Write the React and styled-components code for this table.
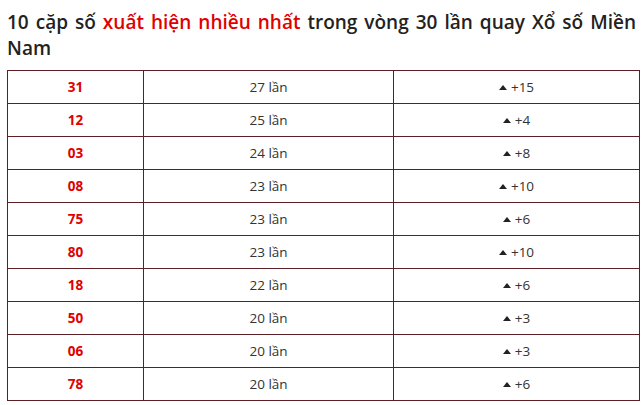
import React from 'react';
import styled, { createGlobalStyle } from 'styled-components';

const GlobalStyle = createGlobalStyle`
  body {
    margin: 0;
    background: #ffffff;
    font-family: 'Open Sans', 'Noto Sans', sans-serif;
  }
`;

const Page = styled.div`
  padding: 9px 6px 0 7px;
`;

const Heading = styled.h2`
  margin: 0 0 9px 0;
  font-size: 19px;
  font-weight: 600;
  line-height: 26px;
  color: #222222;
  text-align: justify;
`;

const Hot = styled.span`
  color: #e00000;
`;

const Table = styled.table`
  width: 629px;
  border-collapse: collapse;
  table-layout: fixed;
  font-size: 13.5px;
  color: #333333;
`;

const Cell = styled.td`
  height: 32px;
  padding: 0;
  border: 1px solid #5b1f25;
  text-align: center;
  vertical-align: middle;
  width: ${({ $w }) => $w}px;
`;

const Number = styled.span`
  color: #e00000;
  font-weight: 700;
`;

const Up = styled.span`
  display: inline-block;
  width: 0;
  height: 0;
  border-left: 4px solid transparent;
  border-right: 4px solid transparent;
  border-bottom: 5px solid #222222;
  margin-right: 4px;
  vertical-align: 2px;
`;

const rows = [
  ['31', 27, 15],
  ['12', 25, 4],
  ['03', 24, 8],
  ['08', 23, 10],
  ['75', 23, 6],
  ['80', 23, 10],
  ['18', 22, 6],
  ['50', 20, 3],
  ['06', 20, 3],
  ['78', 20, 6],
];

export default function App() {
  return (
    <Page>
      <GlobalStyle />
      <Heading>
        10 cặp số <Hot>xuất hiện nhiều nhất</Hot> trong vòng 30 lần quay Xổ số Miền Nam
      </Heading>
      <Table>
        <tbody>
          {rows.map(([num, times, diff]) => (
            <tr key={num}>
              <Cell $w={135}>
                <Number>{num}</Number>
              </Cell>
              <Cell $w={249}>{times} lần</Cell>
              <Cell $w={245}>
                <Up />+{diff}
              </Cell>
            </tr>
          ))}
        </tbody>
      </Table>
    </Page>
  );
}
